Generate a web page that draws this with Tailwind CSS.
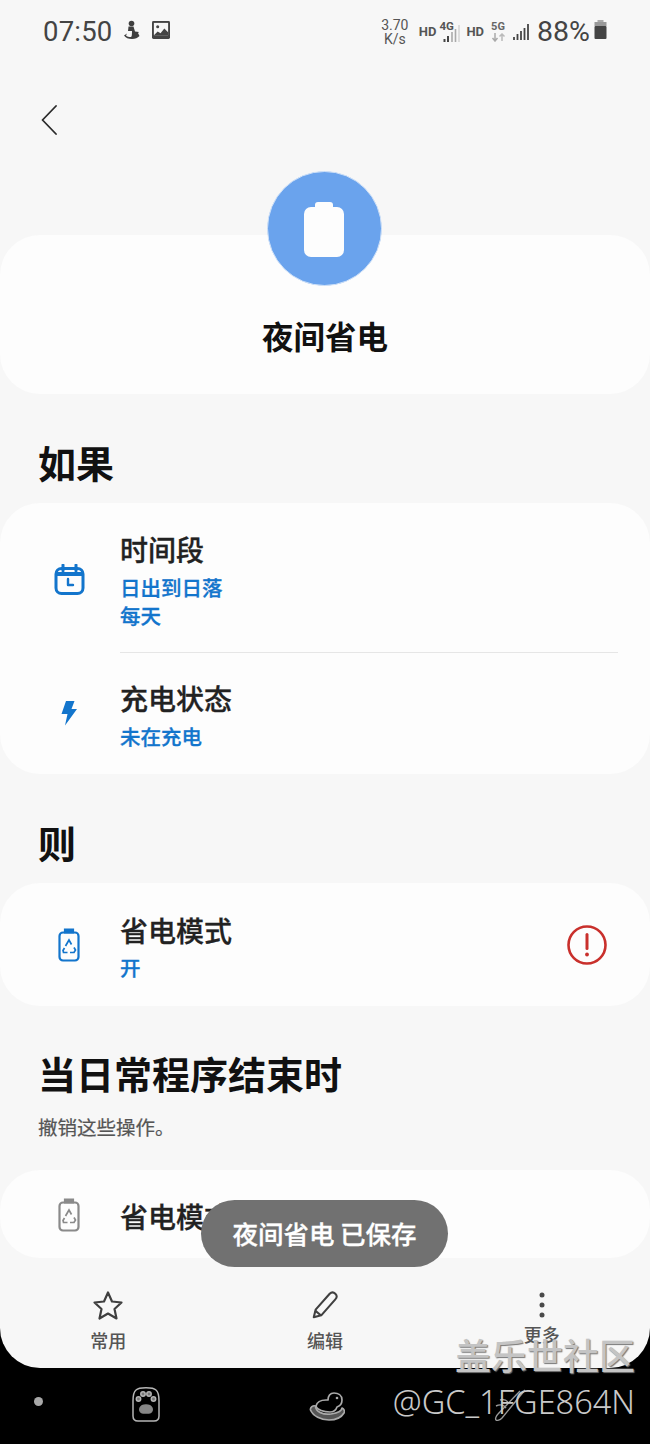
<!doctype html>
<html lang="zh">
<head>
<meta charset="utf-8">
<script src="https://cdn.jsdelivr.net/npm/@tailwindcss/browser@4"></script>
</head>
<body class="m-0">
<div class="relative w-[650px] h-[1444px] overflow-hidden bg-black font-['Noto_Sans_CJK_SC','Noto_Sans',sans-serif] text-[#252525]">
  <div class="h-[1368px] bg-[#f7f7f7] rounded-b-[40px] overflow-hidden flex flex-col">
    <!-- status bar -->
    <div class="h-[60px] pt-[4px] shrink-0 flex items-center pl-[43px] pr-[43px] text-[#444] font-['Roboto',sans-serif]">
      <span class="text-[27.5px] leading-none tracking-[0.2px]">07:50</span>
      <svg class="ml-[11px] mb-[5px]" width="18" height="20" viewBox="0 0 18 20" fill="#3f3f3f"><circle cx="8.500" cy="3.500" r="2.800"/><path d="M5.500 6.500h5l1.500 5 4 .5-1 1 1.500 3c-2 2-4 3-7.500 3S2.500 18 1 15.500l3-2-1 2c1 1 3 1.500 5 1.500 1 0 1-4 1-6H5z"/></svg>
      <svg class="ml-[11px] mb-[5px]" width="18" height="18" viewBox="0 0 19 19"><rect width="19" height="19" rx="1.500" fill="#444"/><rect x="2" y="2" width="15" height="13" fill="#f7f7f7"/><circle cx="6" cy="6" r="1.600" fill="#444"/><path d="M2 15l4-4 3 2 4-5 4 4v3z" fill="#444"/></svg>
      <div class="ml-auto w-[28px] text-center text-[14px] leading-[14px] text-[#555]">3.70<br>K/s</div>
      <span class="ml-[10px] text-[13px] font-bold text-[#555]">HD</span>
      <div class="ml-[3px] relative w-[22px] h-[26px]">
        <span class="absolute left-0 top-[2px] text-[11.500px] leading-none font-bold text-[#555]">4G</span>
        <svg class="absolute left-0 top-0" width="22" height="26" viewBox="0 0 22 26"><path d="M5.500 20v3M9 17v6" stroke="#444" stroke-width="2"/><path d="M13 13v10M16.500 10v13" stroke="#aaa" stroke-width="1.600"/><path d="M20 6v17" stroke="#ccc" stroke-width="1.200"/></svg>
      </div>
      <span class="ml-[5px] text-[13px] font-bold text-[#555]">HD</span>
      <div class="ml-[7px] relative w-[16px] h-[26px]">
        <span class="absolute left-0 top-[2px] text-[11px] leading-none font-bold text-[#666]">5G</span>
        <svg class="absolute left-0 top-[14px]" width="16" height="9" viewBox="0 0 16 9"><path d="M4 0v7M1.500 5L4 8l2.500-3" stroke="#aaa" stroke-width="1.500" fill="none"/><path d="M11 8V1M8.500 3.500L11 1l2.500 2.500" stroke="#bbb" stroke-width="1.500" fill="none"/></svg>
      </div>
      <svg class="ml-[5px]" width="18" height="20" viewBox="0 0 18 20"><path d="M2 15v3M5.500 12v6M9 9v9M12.500 6v12M16 2v16" stroke="#444" stroke-width="1.800"/></svg>
      <span class="ml-[7px] text-[28.500px] leading-none text-[#444]">88%</span>
      <svg class="ml-[4px] mb-[5px]" width="13" height="20" viewBox="0 0 13 20"><rect x="3.500" y="0" width="6" height="3" fill="#aaa"/><rect x="0.500" y="2" width="12" height="4" fill="#999"/><rect x="0.500" y="6" width="12" height="13" rx="1" fill="#444"/></svg>
    </div>

    <!-- back -->
    <div class="h-[44px] mt-[38px] pl-[41px] shrink-0 flex items-center">
      <svg width="16" height="30" viewBox="0 0 16 30" fill="none" stroke="#2a2a2a" stroke-width="1.800" stroke-linecap="round" stroke-linejoin="round"><path d="M15 1L1.500 15 15 29"/></svg>
    </div>

    <!-- header card -->
    <div class="relative mt-[93px] h-[159px] shrink-0 bg-[#fdfdfd] rounded-[40px] flex justify-center">
      <div class="absolute left-[267px] top-[-64px] w-[115px] h-[115px] rounded-full bg-[#6aa3ed] border border-[#cfe1f8] flex items-center justify-center">
        <svg class="mr-[1px]" width="42" height="58" viewBox="0 0 42 58"><path d="M12 5a3 3 0 0 1 3-3h12a3 3 0 0 1 3 3v2h-18z" fill="#fdfdfd"/><rect x="1" y="7" width="40" height="50" rx="7" fill="#fdfdfd"/></svg>
      </div>
      <h1 class="mt-[79px] text-[31.500px] leading-[42px] font-bold text-[#111]">夜间省电</h1>
    </div>

    <!-- 如果 -->
    <h2 class="mt-[41px] pl-[38px] h-[68px] shrink-0 text-[38px] leading-[54px] font-bold text-[#111]">如果</h2>
    <div class="h-[271px] shrink-0 bg-[#fdfdfd] rounded-[40px] flex flex-col">
      <div class="h-[149px] flex">
        <div class="w-[120px] flex items-center pl-[54px] pt-[4px]">
          <svg width="31" height="32" viewBox="0 0 30 32" fill="none" stroke="#1375cc" stroke-width="3"><rect x="1.500" y="4.500" width="27" height="25" rx="5.500"/><path d="M1.500 10h27" stroke-width="4"/><path d="M8.500 1v6M21.500 1v6" stroke-linecap="round"/><path d="M13.500 15v6h5" stroke-width="2.400" stroke-linecap="round" stroke-linejoin="round"/></svg>
        </div>
        <div class="pt-[26px] flex flex-col">
          <div class="text-[28px] leading-[40px] font-medium text-[#222] [-webkit-text-stroke:0.3px_#222]">时间段</div>
          <div class="mt-[4px] text-[20.500px] leading-[28px] font-medium text-[#1375cc] [-webkit-text-stroke:0.3px_#1375cc]">日出到日落<br>每天</div>
        </div>
      </div>
      <div class="ml-[120px] mr-[32px] h-px bg-[#e6e6e6]"></div>
      <div class="flex-1 flex">
        <div class="w-[120px] flex items-center pl-[61px]">
          <svg class="mb-[2px]" width="16" height="26" viewBox="0 0 16 26" fill="#1375cc"><path d="M5 1h8.500l-3 8H16L4 25.500 6.500 14H0.500z"/></svg>
        </div>
        <div class="pt-[25px] flex flex-col">
          <div class="text-[28px] leading-[40px] font-medium text-[#222] [-webkit-text-stroke:0.3px_#222]">充电状态</div>
          <div class="mt-[4px] text-[20.500px] leading-[28px] font-medium text-[#1375cc] [-webkit-text-stroke:0.3px_#1375cc]">未在充电</div>
        </div>
      </div>
    </div>

    <!-- 则 -->
    <h2 class="mt-[41px] pl-[38px] h-[68px] shrink-0 text-[38px] leading-[54px] font-bold text-[#111]">则</h2>
    <div class="h-[123px] shrink-0 bg-[#fdfdfd] rounded-[40px] flex items-stretch">
      <div class="w-[120px] flex items-center pl-[58px]">
        <svg width="22" height="34" viewBox="0 0 22 34" fill="none" stroke="#1375cc" stroke-width="2.200"><path d="M7 1.500h8v3H7z" fill="#1375cc"/><rect x="1.500" y="4.500" width="19" height="28" rx="3.500"/><path d="M7.500 18l3.500-6 2.500 4.500M16 19.500l1.500 2.500-1.500 2.500h-4M9.500 24.500h-4l-.5-2 1.500-2.500" stroke-width="1.700"/></svg>
      </div>
      <div class="pt-[27px] flex flex-col">
        <div class="text-[28px] leading-[40px] font-medium text-[#222] [-webkit-text-stroke:0.3px_#222]">省电模式</div>
        <div class="mt-[3px] text-[20.500px] leading-[28px] font-medium text-[#1375cc] [-webkit-text-stroke:0.3px_#1375cc]">开</div>
      </div>
      <div class="ml-auto mr-[43px] flex items-center">
        <svg width="40" height="40" viewBox="0 0 40 40" fill="none"><circle cx="20" cy="20" r="18.500" stroke="#c9302c" stroke-width="2.600"/><path d="M20 9.500v14" stroke="#c9302c" stroke-width="3" stroke-linecap="round"/><circle cx="20" cy="29.500" r="1.900" fill="#c9302c"/></svg>
      </div>
    </div>

    <!-- 结束时 -->
    <h2 class="mt-[40px] pl-[38px] h-[54px] shrink-0 text-[38px] leading-[54px] font-bold text-[#111]">当日常程序结束时</h2>
    <div class="mt-[12px] pl-[38px] h-[58px] shrink-0 text-[19.500px] leading-[30px] text-[#555] [-webkit-text-stroke:0.2px_#555]">撤销这些操作。</div>
    <div class="h-[88px] shrink-0 bg-[#fdfdfd] rounded-[40px] flex">
      <div class="w-[120px] pl-[58px] pt-[28px]">
        <svg width="22" height="34" viewBox="0 0 22 34" fill="none" stroke="#8a8a8a" stroke-width="2.200"><path d="M7 1.500h8v3H7z" fill="#8a8a8a"/><rect x="1.500" y="4.500" width="19" height="28" rx="3.500"/><path d="M7.500 18l3.500-6 2.500 4.500M16 19.500l1.500 2.500-1.500 2.500h-4M9.500 24.500h-4l-.5-2 1.500-2.500" stroke-width="1.700"/></svg>
      </div>
      <div class="pt-[26px] text-[28px] leading-[40px] font-medium text-[#222] [-webkit-text-stroke:0.3px_#222]">省电模式</div>
    </div>

    <!-- bottom actions -->
    <div class="flex-1 grid grid-cols-3 text-[#555]">
      <div class="flex flex-col items-center pt-[32px]">
        <svg width="32" height="32" viewBox="0 0 32 32" fill="none" stroke="#3f3f3f" stroke-width="2.200" stroke-linejoin="round"><path d="M16 2.500l4 9 9.500 1-7 6.500 2 9.500-8.500-5-8.500 5 2-9.500-7-6.500 9.500-1z"/></svg>
        <span class="mt-[5px] text-[18px] leading-[26px] font-medium">常用</span>
      </div>
      <div class="flex flex-col items-center pt-[32px]">
        <svg width="30" height="30" viewBox="0 0 32 32" fill="none" stroke="#3f3f3f" stroke-width="2.200" stroke-linejoin="round"><path d="M4 29l2-8L21 4c2-2 4-2 6 0s2 4 0 6L12 27z"/><path d="M5.500 22l6 5"/></svg>
        <span class="mt-[7px] text-[18px] leading-[26px] font-medium">编辑</span>
      </div>
      <div class="flex flex-col items-center pt-[32px]">
        <svg width="32" height="32" viewBox="0 0 32 32" fill="#4a4a4a"><circle cx="16" cy="5" r="2.500"/><circle cx="16" cy="15" r="2.500"/><circle cx="16" cy="25" r="2.500"/></svg>
        <span class="mt-[-1px] text-[18px] leading-[26px] font-medium">更多</span>
      </div>
    </div>
  </div>

  <!-- nav bar -->
  <div class="h-[76px] relative">
    <div class="absolute left-[34px] top-[29px] w-[9px] h-[9px] rounded-full bg-[#a8a8a8]"></div>
    <svg class="absolute left-[132px] top-[18px]" width="28" height="36" viewBox="0 0 28 36" fill="none" stroke="#b5b5b5" stroke-width="1.500"><path d="M4 4c3-3 17-3 20 0 2.500 2 3 6 3 11v15c0 3-2 5-5 5H6c-3 0-5-2-5-5V15C1 10 1.500 6 4 4z"/><path d="M8 22c2-4 10-4 12 0 1 3-1 5-3 5h-6c-2 0-4-2-3-5z" fill="#888" stroke="#888"/><circle cx="6.500" cy="13" r="2.200" fill="#777"/><circle cx="11" cy="8" r="2.200" fill="#777"/><circle cx="17" cy="8" r="2.200" fill="#777"/><circle cx="21.500" cy="13" r="2.200" fill="#777"/></svg>
    <svg class="absolute left-[309px] top-[20px]" width="36" height="33" viewBox="0 0 36 33" fill="none" stroke="#aaa" stroke-width="1.700" stroke-linejoin="round"><path d="M1.500 22C1 19.500 4 17 6.500 18c0 6 8 9 15.500 8 6-1 11-3 11-6 2 1 3 3 2 5-3 5-9 7-15 7C12 32 4 28 1.500 22z" fill="#555"/><path d="M7 18c1-4 5-6 10-6h2c0-4 2-7 6-7s8 2 8 7c0 3-2 6-5 7-1 3-3 5-7 5-6 0-13-2-14-6z" fill="#000"/><circle cx="28" cy="10" r="1.300" fill="#aaa" stroke="none"/></svg>
    <svg class="absolute left-[492px] top-[20px]" width="36" height="36" viewBox="0 0 36 36" fill="none" stroke="#999" stroke-width="1.400"><path d="M33 2L10 30c-2 2-5 3-6 2s0-4 2-6L28 3M4 18c4-2 8-1 10 2M8 12c3-1 6 0 8 2"/></svg>
    <!-- watermark 2nd line -->
    <div class="absolute right-[15px] top-[14px] text-[32.500px] leading-[40px] text-[#c9c9c9] font-['Noto_Sans',sans-serif] font-light">@GC_1FGE864N</div>
  </div>

  <!-- watermark 1st line -->
  <div class="absolute right-[15px] top-[1334px] text-[36px] leading-[40px] text-[#c4c4c4] font-medium [text-shadow:1px_1px_1px_#777]">盖乐世社区</div>

  <!-- toast -->
  <div class="absolute left-[201px] top-[1200px] w-[247px] h-[67px] rounded-full bg-[#717171] flex items-center justify-center text-[25.500px] font-medium text-white [-webkit-text-stroke:0.3px_#fff]">夜间省电 已保存</div>
</div>
</body>
</html>
